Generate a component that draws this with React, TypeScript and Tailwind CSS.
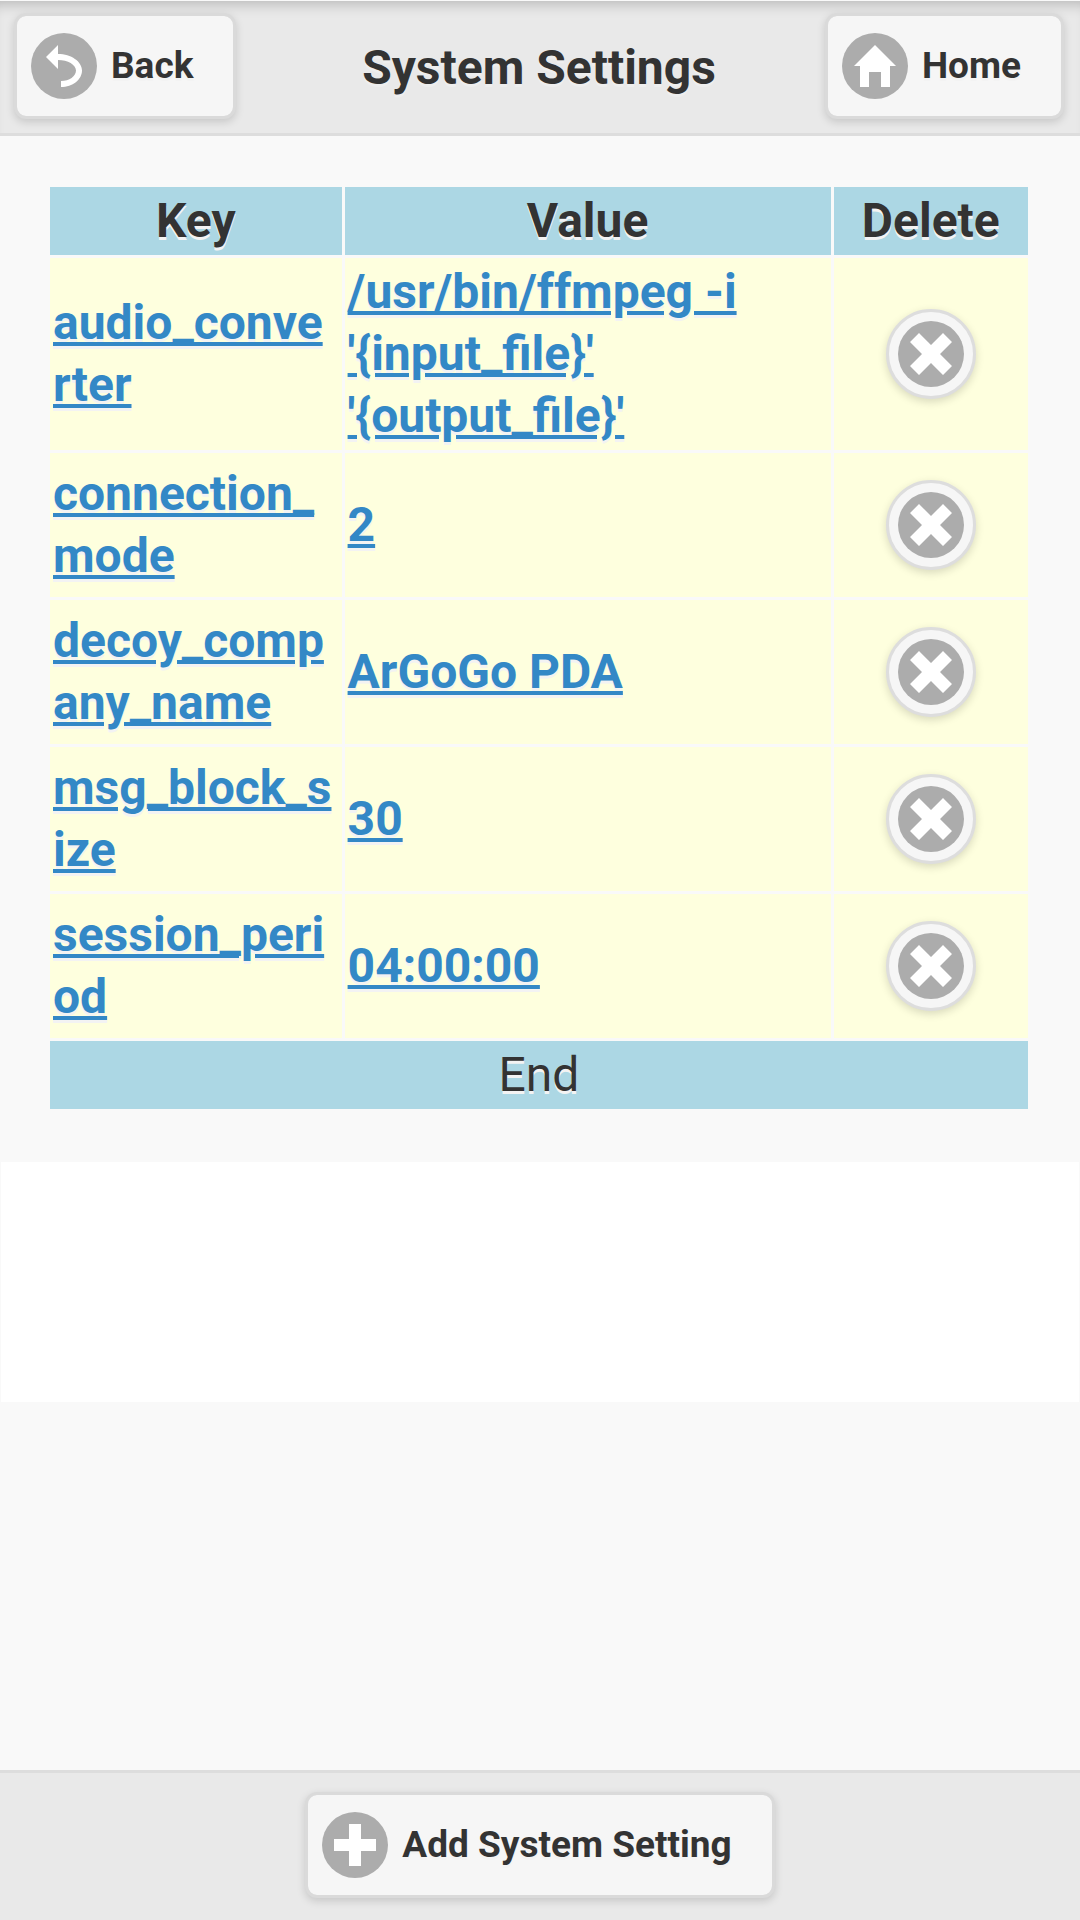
import type { ReactNode } from "react";

const icons = {
  back: <path d="M5,3V0L1,4l4,4V5c3.3,0,6,1.6,6,3.5S8.8,12,6,12v2c3.9,0,7-2.5,7-5.5S9.4,3,5,3z" />,
  home: <polygon points="7,0 0,7 2,7 2,14 5,14 5,9 9,9 9,14 12,14 12,7 14,7" />,
  plus: <polygon points="14,5 9,5 9,0 5,0 5,5 0,5 0,9 5,9 5,14 9,14 9,9 14,9" />,
  remove: <polygon points="14,3 11,0 7,4 3,0 0,3 4,7 0,11 3,14 7,10 11,14 14,11 10,7" />,
};

function Icon({ name }: { name: keyof typeof icons }) {
  return (
    <span className="flex size-[66px] shrink-0 items-center justify-center rounded-full bg-[#acacac]">
      <svg viewBox="0 0 14 14" className="size-[42px] fill-white" aria-hidden="true">
        {icons[name]}
      </svg>
    </span>
  );
}

function ToolbarButton({
  icon,
  className = "",
  children,
}: {
  icon: keyof typeof icons;
  className?: string;
  children: ReactNode;
}) {
  return (
    <button
      type="button"
      className={`flex h-[106px] items-center gap-[14px] whitespace-nowrap rounded-xl border-3 border-[#dadada] bg-[#f6f6f6] bg-clip-padding pl-[14px] pr-[40px] text-[37px] font-bold shadow-[0_3px_9px_rgba(0,0,0,0.15)] [text-shadow:0_3px_0_#f3f3f3] ${className}`}
    >
      <Icon name={icon} />
      {children}
    </button>
  );
}

const settings = [
  { key: "audio_converter", value: "/usr/bin/ffmpeg -i '{input_file}' '{output_file}'" },
  { key: "connection_mode", value: "2" },
  { key: "decoy_company_name", value: "ArGoGo PDA" },
  { key: "msg_block_size", value: "30" },
  { key: "session_period", value: "04:00:00" },
];

function SettingLink({ children, className = "" }: { children: ReactNode; className?: string }) {
  return (
    <a href="#edit" className={`font-bold text-[#3388c6] underline ${className}`}>
      {children}
    </a>
  );
}

export default function App() {
  return (
    <div className="flex min-h-screen flex-col bg-[#f9f9f9] font-[Roboto,sans-serif] text-[#333333]">
      <header className="grid grid-cols-[1fr_auto_1fr] items-center border-b-3 border-[#dddddd] bg-[#e9e9e9] pt-[13px] pb-[14px] pl-[14px] pr-[16px] shadow-[inset_0_1px_0_#f9f9f9,inset_0_14px_14px_-10px_rgba(0,0,0,0.22)]">
        <ToolbarButton icon="back" className="justify-self-start">
          Back
        </ToolbarButton>
        <h1 className="pt-1 text-[48px] leading-[62px] font-bold [text-shadow:0_3px_0_#eeeeee]">System Settings</h1>
        <ToolbarButton icon="home" className="justify-self-end">
          Home
        </ToolbarButton>
      </header>

      <main className="pt-12 pr-[49px] pb-[50px] pl-[47px]">
        <table className="w-full table-fixed border-separate border-spacing-[3px] text-[48px] leading-[62px] [text-shadow:0_3px_0_#f3f3f3]">
          <colgroup>
            <col className="w-[30%]" />
            <col className="w-[50%]" />
            <col className="w-[20%]" />
          </colgroup>
          <thead className="bg-[#acd7e4]">
            <tr>
              <th className="p-[3px]">Key</th>
              <th className="p-[3px]">Value</th>
              <th className="p-[3px]">Delete</th>
            </tr>
          </thead>
          <tbody>
            {settings.map((s) => (
              <tr key={s.key} className="bg-[#feffde]">
                <td className="p-[3px]">
                  <SettingLink className="break-all">{s.key}</SettingLink>
                </td>
                <td className="p-[3px]">
                  <SettingLink>{s.value}</SettingLink>
                </td>
                <td className="p-[3px]">
                  <button
                    type="button"
                    aria-label={`Delete ${s.key}`}
                    className="mx-auto my-6 flex size-[90px] items-center justify-center rounded-full border-3 border-[#dddddd] bg-[#f6f6f6] shadow-[0_3px_9px_rgba(0,0,0,0.15)]"
                  >
                    <Icon name="remove" />
                  </button>
                </td>
              </tr>
            ))}
          </tbody>
          <tfoot>
            <tr className="bg-[#acd7e4]">
              <td colSpan={3} className="p-[3px] text-center">
                End
              </td>
            </tr>
          </tfoot>
        </table>
      </main>

      <div className="mx-px h-[240px] bg-white" />

      <footer className="mt-auto flex justify-center border-t-3 border-[#dddddd] bg-[#e9e9e9] pt-[19px] pb-[22px]">
        <ToolbarButton icon="plus">Add System Setting</ToolbarButton>
      </footer>
    </div>
  );
}
